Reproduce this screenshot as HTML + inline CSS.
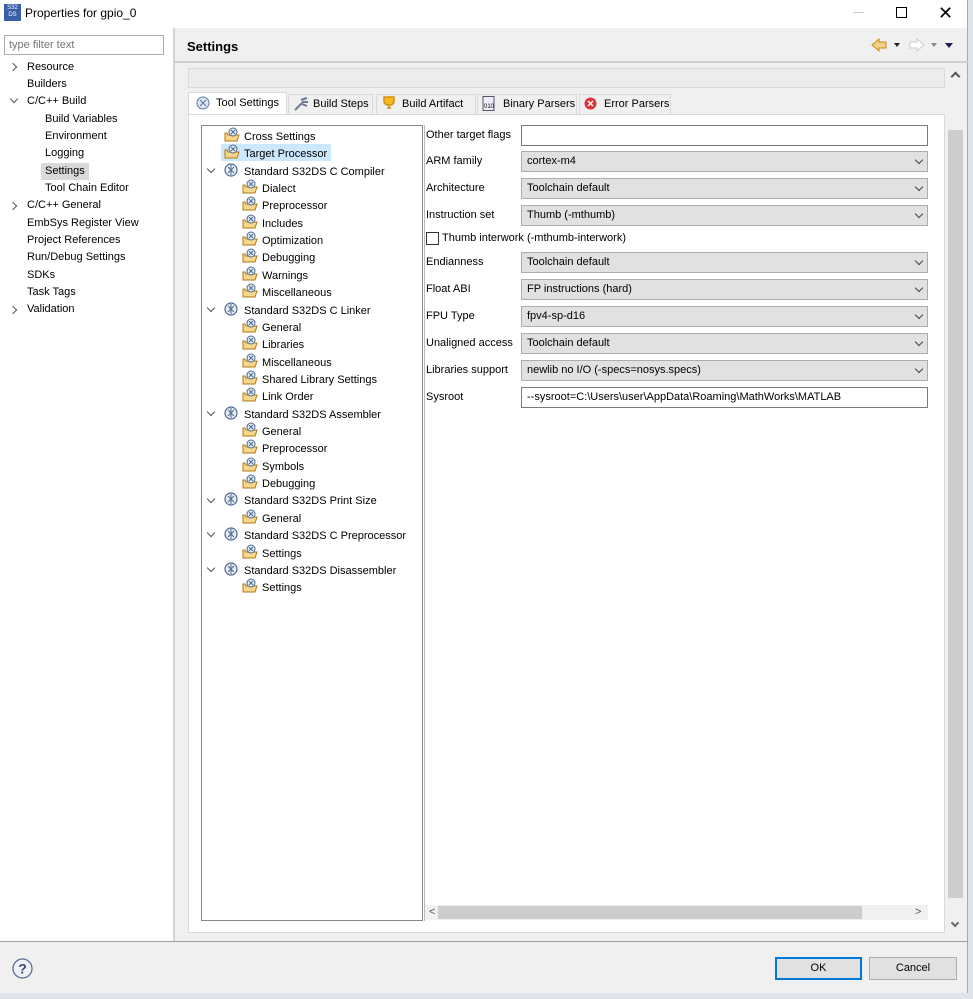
<!DOCTYPE html>
<html><head><meta charset="utf-8"><style>
*{margin:0;padding:0;box-sizing:border-box}
body{width:973px;height:999px;position:relative;overflow:hidden;background:#dfe3ea;font-family:"Liberation Sans",sans-serif;font-size:11px;color:#000}
.a{position:absolute;white-space:nowrap}
.t{position:absolute;white-space:nowrap;line-height:17px;height:17px}
.ar{position:absolute;width:6px;height:6px;border-right:1px solid #555;border-bottom:1px solid #555}
.right{transform:rotate(-45deg)}
.down{transform:rotate(45deg)}
.fld{position:absolute;left:521px;width:407px;height:21px;background:#e1e1e1;border:1px solid #adadad;padding-left:5px;line-height:19px;white-space:nowrap}
.fld .c{position:absolute;right:5px;top:5px;width:6px;height:6px;border-right:1px solid #444;border-bottom:1px solid #444;transform:rotate(45deg)}
.lb{position:absolute;left:426px;line-height:17px;white-space:nowrap}
.tab{position:absolute;top:94px;height:20px;border:1px solid #d9d9d9;border-bottom:none;background:#f0f0f0;line-height:19px;padding-left:24px;white-space:nowrap;overflow:hidden}
.ri{position:absolute;height:17px;line-height:17px;white-space:nowrap}
</style></head><body>
<div class="a" style="left:0;top:0;width:968px;height:993px;background:#f0f0f0;border-right:1px solid #aaa"></div>
<div class="a" style="left:0;top:0;width:967px;height:28px;background:#fff"></div>
<div class="a" style="left:4px;top:4px;width:17px;height:17px;background:#3a5fa8;color:#fff;font-size:6px;line-height:7px;text-align:center;padding-top:1px">S32<br>DS</div>
<div class="a" style="left:25px;top:5px;font-size:12px;line-height:16px">Properties for gpio_0</div>
<div class="a" style="left:853px;top:12px;width:11px;height:1px;background:#ccc"></div>
<div class="a" style="left:896px;top:7px;width:11px;height:11px;border:1px solid #000"></div>
<div class="a" style="left:938px;top:0px;font-size:18px;line-height:26px;font-weight:300">✕</div>

<div class="a" style="left:0;top:28px;width:173px;height:914px;background:#fff"></div>
<div class="a" style="left:173px;top:28px;width:2px;height:914px;background:#d4d4d4"></div>
<div class="a" style="left:4px;top:35px;width:160px;height:20px;border:1px solid #adadad;color:#777;padding-left:4px;line-height:18px">type filter text</div>
<div class="ar right" style="left:10px;top:64px"></div>
<div class="t" style="left:27px;top:59px">Resource</div>
<div class="t" style="left:27px;top:76px">Builders</div>
<div class="ar down" style="left:11px;top:96px"></div>
<div class="t" style="left:27px;top:93px">C/C++ Build</div>
<div class="t" style="left:45px;top:111px">Build Variables</div>
<div class="t" style="left:45px;top:128px">Environment</div>
<div class="t" style="left:45px;top:145px">Logging</div>
<div class="a" style="left:41px;top:163px;width:48px;height:17px;background:#d9d9d9"></div>
<div class="t" style="left:45px;top:163px">Settings</div>
<div class="t" style="left:45px;top:180px">Tool Chain Editor</div>
<div class="ar right" style="left:10px;top:203px"></div>
<div class="t" style="left:27px;top:197px">C/C++ General</div>
<div class="t" style="left:27px;top:215px">EmbSys Register View</div>
<div class="t" style="left:27px;top:232px">Project References</div>
<div class="t" style="left:27px;top:249px">Run/Debug Settings</div>
<div class="t" style="left:27px;top:267px">SDKs</div>
<div class="t" style="left:27px;top:284px">Task Tags</div>
<div class="ar right" style="left:10px;top:307px"></div>
<div class="t" style="left:27px;top:301px">Validation</div>

<div class="a" style="left:187px;top:38px;font-size:13px;font-weight:bold;line-height:17px">Settings</div>
<div class="a" style="left:175px;top:61px;width:793px;height:2px;background:#d0d0d0"></div>
<svg class="a" style="left:870px;top:37px" width="90" height="16" viewBox="0 0 90 16">
<path d="M2 8 L9 2 L9 5 L16 5 L16 11 L9 11 L9 14 Z" fill="#f3d08a" stroke="#c98a1c"/>
<path d="M24 6 L30 6 L27 10 Z" fill="#222"/>
<path d="M54 8 L47 2 L47 5 L40 5 L40 11 L47 11 L47 14 Z" fill="#fff" stroke="#ccc"/>
<path d="M61 6 L67 6 L64 10 Z" fill="#888"/>
<path d="M75 6 L83 6 L79 11 Z" fill="#2a1850"/>
</svg>

<div class="a" style="left:188px;top:68px;width:757px;height:20px;background:#ececec;border:1px solid #dadada"></div>
<div class="a" style="left:188px;top:114px;width:757px;height:819px;background:#fff;border:1px solid #d9d9d9"></div>
<div class="tab" style="left:188px;top:92px;height:22px;background:#fff;width:99px;padding-left:27px;line-height:21px">Tool Settings</div>
<div class="tab" style="left:288px;width:85px">Build Steps</div>
<div class="tab" style="left:376px;width:100px;padding-left:25px">Build Artifact</div>
<div class="tab" style="left:477px;width:100px;padding-left:25px">Binary Parsers</div>
<div class="tab" style="left:579px;width:92px">Error Parsers</div>
<svg class="a" style="left:196px;top:96px" width="14" height="14"><circle cx="7" cy="7" r="6" fill="#dde6f0" stroke="#5a7aa0"/><path d="M4 4 L10 10 M10 4 L4 10" stroke="#5a7aa0"/></svg>
<svg class="a" style="left:293px;top:97px" width="16" height="14"><path d="M2 13 L9 6 M8 3 L14 1 M9 5 L15 5 M9 7 L14 9" stroke="#6a7a90" stroke-width="2"/></svg>
<svg class="a" style="left:381px;top:96px" width="16" height="14"><path d="M3 1 H13 V5 Q13 9 8 9 Q3 9 3 5 Z M6 12 H10 M8 9 V12" fill="#f5b820" stroke="#d09010" stroke-width="1.5"/></svg>
<svg class="a" style="left:482px;top:96px" width="14" height="15"><rect x="1" y="0.5" width="11" height="14" fill="#eef" stroke="#556"/><text x="2" y="12" font-size="6" font-family="Liberation Sans">010</text></svg>
<svg class="a" style="left:584px;top:97px" width="13" height="13"><circle cx="6.5" cy="6.5" r="6" fill="#e0303a"/><path d="M4 4 L9 9 M9 4 L4 9" stroke="#fff" stroke-width="1.5"/></svg>

<div class="a" style="left:201px;top:125px;width:222px;height:796px;border:1px solid #828790;background:#fff"></div>
<div class="a" style="left:221px;top:144px;width:110px;height:17px;background:#cce8ff"></div>

<div class="lb" style="top:127px">Other target flags</div>
<div class="fld" style="top:125px;background:#fff;border-color:#7a7a7a"></div>
<div class="lb" style="top:153px">ARM family</div>
<div class="fld" style="top:151px">cortex-m4<span class="c"></span></div>
<div class="lb" style="top:180px">Architecture</div>
<div class="fld" style="top:178px">Toolchain default<span class="c"></span></div>
<div class="lb" style="top:207px">Instruction set</div>
<div class="fld" style="top:205px">Thumb (-mthumb)<span class="c"></span></div>
<div class="a" style="left:426px;top:232px;width:13px;height:13px;border:1px solid #333;background:#fff"></div>
<div class="lb" style="left:442px;top:230px">Thumb interwork (-mthumb-interwork)</div>
<div class="lb" style="top:254px">Endianness</div>
<div class="fld" style="top:252px">Toolchain default<span class="c"></span></div>
<div class="lb" style="top:281px">Float ABI</div>
<div class="fld" style="top:279px">FP instructions (hard)<span class="c"></span></div>
<div class="lb" style="top:308px">FPU Type</div>
<div class="fld" style="top:306px">fpv4-sp-d16<span class="c"></span></div>
<div class="lb" style="top:335px">Unaligned access</div>
<div class="fld" style="top:333px">Toolchain default<span class="c"></span></div>
<div class="lb" style="top:362px">Libraries support</div>
<div class="fld" style="top:360px">newlib no I/O (-specs=nosys.specs)<span class="c"></span></div>
<div class="lb" style="top:389px">Sysroot</div>
<div class="fld" style="top:387px;background:#fff;border-color:#7a7a7a;overflow:hidden">--sysroot=C:\Users\user\AppData\Roaming\MathWorks\MATLAB</div>
<div class="a" style="left:424px;top:125px;width:1px;height:796px;background:#bbb"></div>

<div class="a" style="left:425px;top:905px;width:503px;height:15px;background:#f0f0f0"></div>
<div class="a" style="left:438px;top:906px;width:424px;height:13px;background:#cdcdcd"></div>
<div class="a" style="left:429px;top:906px;font-size:11px;line-height:13px;color:#555">&lt;</div>
<div class="a" style="left:915px;top:906px;font-size:11px;line-height:13px;color:#555">&gt;</div>

<div class="a" style="left:947px;top:68px;width:17px;height:870px;background:#f0f0f0"></div>
<div class="a" style="left:948px;top:130px;width:15px;height:768px;background:#cdcdcd"></div>
<div class="a" style="left:952px;top:73px;width:7px;height:7px;border-left:2px solid #555;border-top:2px solid #555;transform:rotate(45deg)"></div>
<div class="a" style="left:952px;top:920px;width:6px;height:6px;border-right:2px solid #666;border-bottom:2px solid #666;transform:rotate(45deg)"></div>

<div class="a" style="left:0;top:941px;width:968px;height:1px;background:#a0a0a0"></div>
<svg class="a" style="left:12px;top:958px" width="21" height="21"><circle cx="10.5" cy="10.5" r="9.5" fill="#eef2f8" stroke="#5a6e90" stroke-width="1.3"/><text x="10.5" y="15.5" text-anchor="middle" font-size="14" font-weight="bold" fill="#3a4a6a" font-family="Liberation Sans">?</text></svg>
<div class="a" style="left:775px;top:957px;width:87px;height:23px;background:#e1e1e1;border:2px solid #0078d7;text-align:center;line-height:19px">OK</div>
<div class="a" style="left:869px;top:957px;width:88px;height:23px;background:#e1e1e1;border:1px solid #adadad;text-align:center;line-height:21px">Cancel</div>

<svg width="0" height="0" style="position:absolute"><defs>
<g id="fo"><path d="M1 6 L1 14 L13 14 L15 8 L4 8 L3 6 Z" fill="#f8d68a" stroke="#b07818"/><circle cx="9" cy="5" r="4" fill="#e6ecf4" stroke="#4d6a90"/><path d="M7 3 L11 7 M11 3 L7 7" stroke="#4d6a90"/></g>
<g id="ge"><circle cx="7" cy="8" r="6" fill="#e6ecf4" stroke="#4d6a90" stroke-width="1.2"/><path d="M4 5 L10 11 M10 5 L4 11 M7 3 V13" stroke="#4d6a90"/></g>
</defs></svg>
<div class="ri" style="left:224px;top:127px"><svg width="16" height="16" style="vertical-align:-3px"><use href="#fo"/></svg><span style="margin-left:4px">Cross Settings</span></div>
<div class="ri" style="left:224px;top:144px"><svg width="16" height="16" style="vertical-align:-3px"><use href="#fo"/></svg><span style="margin-left:4px">Target Processor</span></div>
<div class="ar down" style="left:208px;top:166px"></div><div class="ri" style="left:224px;top:162px"><svg width="16" height="16" style="vertical-align:-3px"><use href="#ge"/></svg><span style="margin-left:4px">Standard S32DS C Compiler</span></div>
<div class="ri" style="left:242px;top:179px"><svg width="16" height="16" style="vertical-align:-3px"><use href="#fo"/></svg><span style="margin-left:4px">Dialect</span></div>
<div class="ri" style="left:242px;top:196px"><svg width="16" height="16" style="vertical-align:-3px"><use href="#fo"/></svg><span style="margin-left:4px">Preprocessor</span></div>
<div class="ri" style="left:242px;top:214px"><svg width="16" height="16" style="vertical-align:-3px"><use href="#fo"/></svg><span style="margin-left:4px">Includes</span></div>
<div class="ri" style="left:242px;top:231px"><svg width="16" height="16" style="vertical-align:-3px"><use href="#fo"/></svg><span style="margin-left:4px">Optimization</span></div>
<div class="ri" style="left:242px;top:248px"><svg width="16" height="16" style="vertical-align:-3px"><use href="#fo"/></svg><span style="margin-left:4px">Debugging</span></div>
<div class="ri" style="left:242px;top:266px"><svg width="16" height="16" style="vertical-align:-3px"><use href="#fo"/></svg><span style="margin-left:4px">Warnings</span></div>
<div class="ri" style="left:242px;top:283px"><svg width="16" height="16" style="vertical-align:-3px"><use href="#fo"/></svg><span style="margin-left:4px">Miscellaneous</span></div>
<div class="ar down" style="left:208px;top:305px"></div><div class="ri" style="left:224px;top:301px"><svg width="16" height="16" style="vertical-align:-3px"><use href="#ge"/></svg><span style="margin-left:4px">Standard S32DS C Linker</span></div>
<div class="ri" style="left:242px;top:318px"><svg width="16" height="16" style="vertical-align:-3px"><use href="#fo"/></svg><span style="margin-left:4px">General</span></div>
<div class="ri" style="left:242px;top:335px"><svg width="16" height="16" style="vertical-align:-3px"><use href="#fo"/></svg><span style="margin-left:4px">Libraries</span></div>
<div class="ri" style="left:242px;top:353px"><svg width="16" height="16" style="vertical-align:-3px"><use href="#fo"/></svg><span style="margin-left:4px">Miscellaneous</span></div>
<div class="ri" style="left:242px;top:370px"><svg width="16" height="16" style="vertical-align:-3px"><use href="#fo"/></svg><span style="margin-left:4px">Shared Library Settings</span></div>
<div class="ri" style="left:242px;top:387px"><svg width="16" height="16" style="vertical-align:-3px"><use href="#fo"/></svg><span style="margin-left:4px">Link Order</span></div>
<div class="ar down" style="left:208px;top:409px"></div><div class="ri" style="left:224px;top:405px"><svg width="16" height="16" style="vertical-align:-3px"><use href="#ge"/></svg><span style="margin-left:4px">Standard S32DS Assembler</span></div>
<div class="ri" style="left:242px;top:422px"><svg width="16" height="16" style="vertical-align:-3px"><use href="#fo"/></svg><span style="margin-left:4px">General</span></div>
<div class="ri" style="left:242px;top:439px"><svg width="16" height="16" style="vertical-align:-3px"><use href="#fo"/></svg><span style="margin-left:4px">Preprocessor</span></div>
<div class="ri" style="left:242px;top:457px"><svg width="16" height="16" style="vertical-align:-3px"><use href="#fo"/></svg><span style="margin-left:4px">Symbols</span></div>
<div class="ri" style="left:242px;top:474px"><svg width="16" height="16" style="vertical-align:-3px"><use href="#fo"/></svg><span style="margin-left:4px">Debugging</span></div>
<div class="ar down" style="left:208px;top:496px"></div><div class="ri" style="left:224px;top:491px"><svg width="16" height="16" style="vertical-align:-3px"><use href="#ge"/></svg><span style="margin-left:4px">Standard S32DS Print Size</span></div>
<div class="ri" style="left:242px;top:509px"><svg width="16" height="16" style="vertical-align:-3px"><use href="#fo"/></svg><span style="margin-left:4px">General</span></div>
<div class="ar down" style="left:208px;top:530px"></div><div class="ri" style="left:224px;top:526px"><svg width="16" height="16" style="vertical-align:-3px"><use href="#ge"/></svg><span style="margin-left:4px">Standard S32DS C Preprocessor</span></div>
<div class="ri" style="left:242px;top:544px"><svg width="16" height="16" style="vertical-align:-3px"><use href="#fo"/></svg><span style="margin-left:4px">Settings</span></div>
<div class="ar down" style="left:208px;top:565px"></div><div class="ri" style="left:224px;top:561px"><svg width="16" height="16" style="vertical-align:-3px"><use href="#ge"/></svg><span style="margin-left:4px">Standard S32DS Disassembler</span></div>
<div class="ri" style="left:242px;top:578px"><svg width="16" height="16" style="vertical-align:-3px"><use href="#fo"/></svg><span style="margin-left:4px">Settings</span></div>
</body></html>
